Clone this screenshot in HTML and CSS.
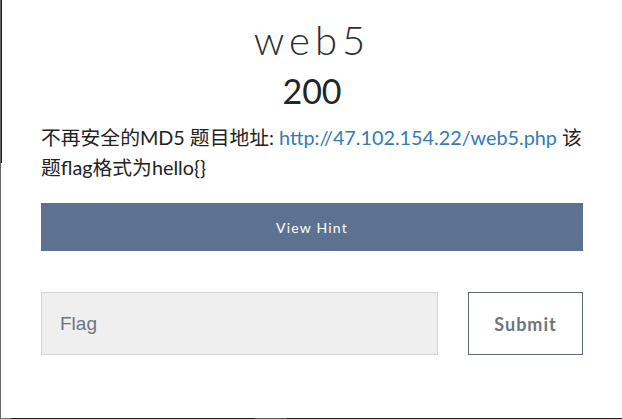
FILE: index.html
```html
<!DOCTYPE html>
<html lang="zh">
<head>
<meta charset="utf-8">
<title>web5</title>
<link rel="stylesheet" href="styles.css">
</head>
<body>
<div class="frame">
  <div class="modal">
    <h3 class="title">web5</h3>
    <h4 class="value">200</h4>
    <p class="desc">不再安全的MD5 题目地址: <a href="#" class="link">http://47.102.154.22/web5.php</a> 该<br>题flag格式为hello{}</p>
    <button class="hint">View Hint</button>
    <div class="submit-row">
      <input class="flag" type="text" placeholder="Flag">
      <button class="submit">Submit</button>
    </div>
  </div>
  <div class="bottom-bar"><span class="seg-left"></span><span class="seg-mid"></span></div>
</div>
</body>
</html>
```

FILE: styles.css
```css
html, body {
  margin: 0;
  padding: 0;
  background: #ffffff;
}
body {
  width: 622px;
  height: 419px;
  overflow: hidden;
  font-family: Lato, "Noto Sans CJK SC", sans-serif;
  color: #212529;
}
.frame {
  position: relative;
  width: 622px;
  height: 419px;
  box-sizing: border-box;
  border-left: 1px solid #666666;
  background: linear-gradient(to bottom, #1c1c1c 0, #1c1c1c 163px, transparent 163px);
  background-size: 1px 100%;
  background-repeat: no-repeat;
}
.modal {
  padding: 0 39px 0 40px;
  display: flex;
  flex-direction: column;
}
.title {
  margin: 17px 0 0;
  text-align: center;
  font-family: Lato, sans-serif;
  font-weight: 300;
  font-size: 40px;
  letter-spacing: 5px;
  line-height: 46px;
  color: #2a2d31;
}
.value {
  margin: 8px 0 0;
  text-align: center;
  font-weight: 400;
  font-size: 34px;
  line-height: 40px;
  color: #212529;
}
.desc {
  margin: 11px 0 0;
  font-size: 19.8px;
  line-height: 30px;
  color: #222222;
}
.link {
  color: #337ab7;
  text-decoration: none;
}
.hint {
  margin-top: 21px;
  height: 48px;
  width: 100%;
  border: 0;
  background: #5c7290;
  color: #ffffff;
  font-family: Lato, sans-serif;
  font-size: 14px;
  letter-spacing: 1.2px;
  padding: 0;
}
.submit-row {
  margin-top: 41px;
  display: flex;
  gap: 30px;
  align-items: stretch;
}
.flag {
  width: 397px;
  height: 63px;
  box-sizing: border-box;
  border: 1px solid #d2d6da;
  background: #efefef;
  padding: 0 18px;
  font-family: "Liberation Sans", Arial, sans-serif;
  font-size: 19px;
  color: #495057;
}
.flag::placeholder {
  color: #6c757d;
}
.submit {
  width: 115px;
  height: 63px;
  box-sizing: border-box;
  border: 1px solid #5f6a75;
  background: #ffffff;
  color: #6c757d;
  font-family: Lato, sans-serif;
  font-weight: 700;
  font-size: 18px;
  letter-spacing: 1px;
  padding: 0;
}
.bottom-bar {
  position: absolute;
  left: -1px;
  right: 0;
  bottom: 0;
  height: 1px;
  background: #1a1a1a;
}
.seg-left {
  position: absolute;
  left: 0;
  width: 11px;
  height: 1px;
  background: #777777;
}
.seg-mid {
  position: absolute;
  left: 255px;
  width: 32px;
  height: 1px;
  background: #555555;
}
```
